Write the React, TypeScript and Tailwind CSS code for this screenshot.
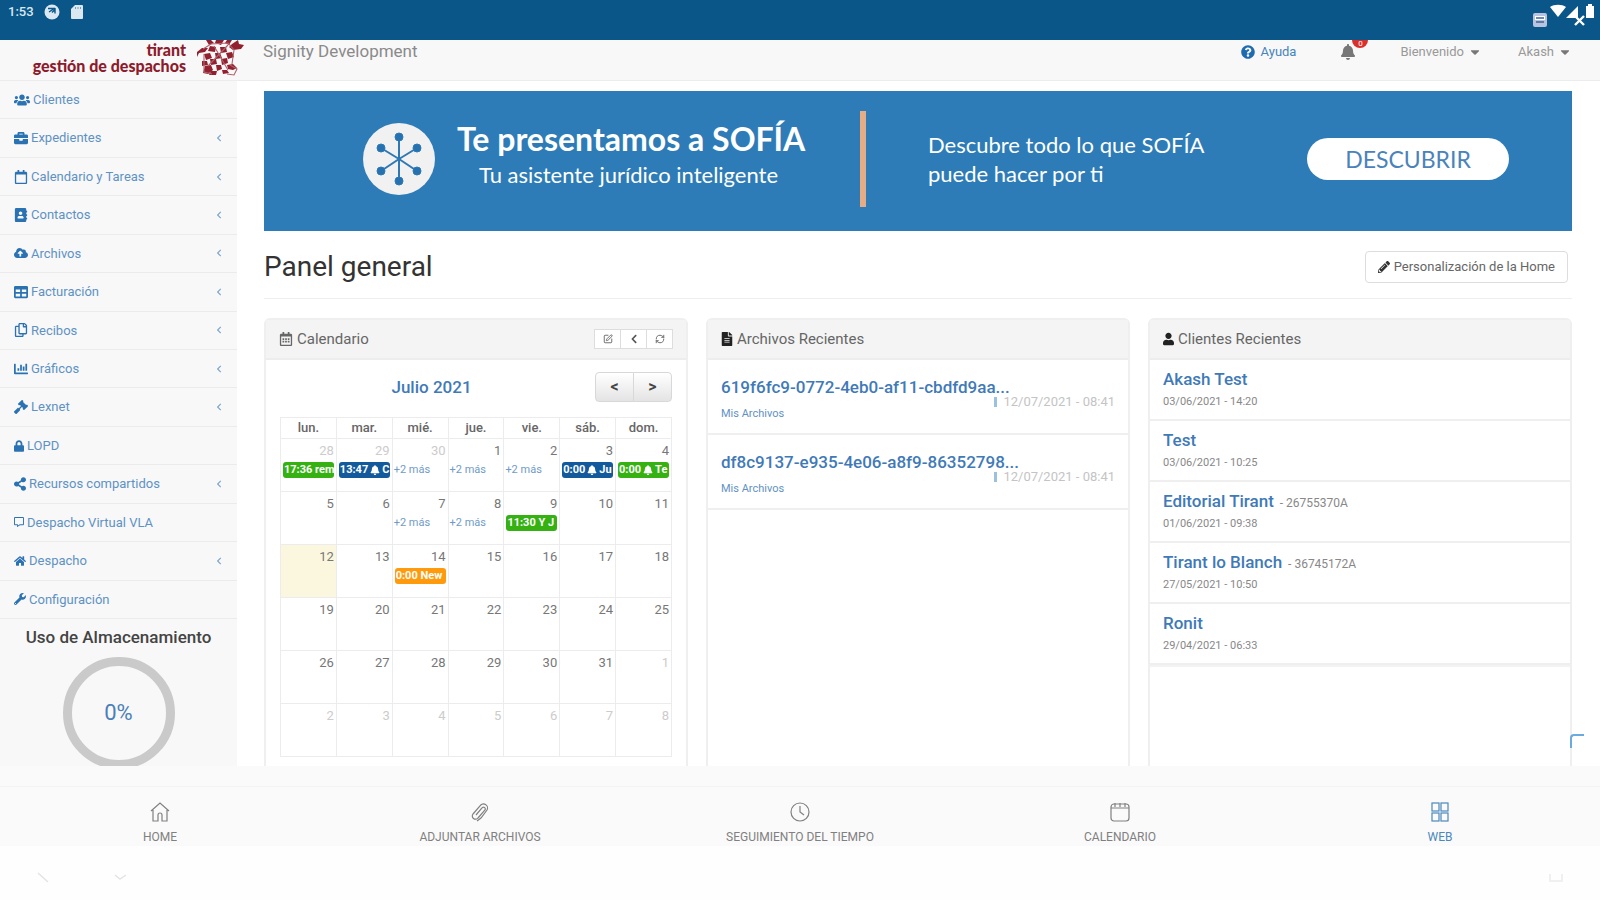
import type { ReactNode } from "react";
import type { IconType } from "react-icons";
import {
  FaAddressBook,
  FaBell,
  FaBriefcase,
  FaCaretDown,
  FaChartBar,
  FaChevronLeft,
  FaCloudUploadAlt,
  FaFileAlt,
  FaGavel,
  FaHome,
  FaLock,
  FaPencilAlt,
  FaQuestionCircle,
  FaRegCalendar,
  FaRegCalendarAlt,
  FaRegCopy,
  FaShareAlt,
  FaTable,
  FaUser,
  FaUsers,
  FaWrench,
} from "react-icons/fa";
import { FaRegMessage } from "react-icons/fa6";
import { LuRefreshCw, LuSquarePen } from "react-icons/lu";

type MenuItem = { label: string; icon: IconType; arrow?: boolean; iconWidth?: string };

const menu: MenuItem[] = [
  { label: "Clientes", icon: FaUsers, iconWidth: "w-4" },
  { label: "Expedientes", icon: FaBriefcase, arrow: true },
  { label: "Calendario y Tareas", icon: FaRegCalendar, arrow: true },
  { label: "Contactos", icon: FaAddressBook, arrow: true },
  { label: "Archivos", icon: FaCloudUploadAlt, arrow: true },
  { label: "Facturación", icon: FaTable, arrow: true },
  { label: "Recibos", icon: FaRegCopy, arrow: true },
  { label: "Gráficos", icon: FaChartBar, arrow: true },
  { label: "Lexnet", icon: FaGavel, arrow: true },
  { label: "LOPD", icon: FaLock, iconWidth: "w-2.5" },
  { label: "Recursos compartidos", icon: FaShareAlt, arrow: true, iconWidth: "w-3" },
  { label: "Despacho Virtual VLA", icon: FaRegMessage, iconWidth: "w-2.5" },
  { label: "Despacho", icon: FaHome, arrow: true, iconWidth: "w-3" },
  { label: "Configuración", icon: FaWrench, iconWidth: "w-3" },
];

type CalEvent = { text: string; color: string; bell?: boolean; after?: string };
type Day = { n: number; out?: boolean; today?: boolean; more?: boolean; event?: CalEvent };

const green = "bg-[#35b112]";
const navy = "bg-[#135a9c]";
const orange = "bg-[#ff9a0c]";

const weekdays = ["lun.", "mar.", "mié.", "jue.", "vie.", "sáb.", "dom."];

const weeks: Day[][] = [
  [
    { n: 28, out: true, event: { text: "17:36 rem", color: green } },
    { n: 29, out: true, event: { text: "13:47", color: navy, bell: true, after: "C" } },
    { n: 30, out: true, more: true },
    { n: 1, more: true },
    { n: 2, more: true },
    { n: 3, event: { text: "0:00", color: navy, bell: true, after: "Ju" } },
    { n: 4, event: { text: "0:00", color: green, bell: true, after: "Te" } },
  ],
  [
    { n: 5 },
    { n: 6 },
    { n: 7, more: true },
    { n: 8, more: true },
    { n: 9, event: { text: "11:30 Y J", color: green } },
    { n: 10 },
    { n: 11 },
  ],
  [
    { n: 12, today: true },
    { n: 13 },
    { n: 14, event: { text: "0:00 New", color: orange } },
    { n: 15 },
    { n: 16 },
    { n: 17 },
    { n: 18 },
  ],
  [19, 20, 21, 22, 23, 24, 25].map((n) => ({ n })),
  [{ n: 26 }, { n: 27 }, { n: 28 }, { n: 29 }, { n: 30 }, { n: 31 }, { n: 1, out: true }],
  [2, 3, 4, 5, 6, 7, 8].map((n) => ({ n, out: true })),
];

const files = [
  { name: "619f6fc9-0772-4eb0-af11-cbdfd9aa...", date: "12/07/2021 - 08:41" },
  { name: "df8c9137-e935-4e06-a8f9-86352798...", date: "12/07/2021 - 08:41" },
];

const clients = [
  { name: "Akash Test", date: "03/06/2021 - 14:20" },
  { name: "Test", date: "03/06/2021 - 10:25" },
  { name: "Editorial Tirant", code: "26755370A", date: "01/06/2021 - 09:38" },
  { name: "Tirant lo Blanch", code: "36745172A", date: "27/05/2021 - 10:50" },
  { name: "Ronit", date: "29/04/2021 - 06:33" },
];

function StatusBar() {
  return (
    <div className="flex h-10 shrink-0 items-start justify-between bg-[#0a5688] px-2 text-white">
      <div className="flex h-6 items-center gap-2.5 text-[#dbe8f2]">
        <span className="text-[13px] font-medium">1:53</span>
        <svg className="size-4" viewBox="0 0 16 16" aria-hidden="true">
          <circle cx="8" cy="8" r="7.5" fill="currentColor" />
          <path d="M4 4.5h6M5 8l6-4M8 8.5l3 -3v4" stroke="#0a5688" strokeWidth="1.4" fill="none" />
        </svg>
        <svg className="h-4 w-3.5" viewBox="0 0 14 16" aria-hidden="true">
          <path d="M5 1h7a1 1 0 0 1 1 1v12a1 1 0 0 1-1 1H2a1 1 0 0 1-1-1V5z" fill="currentColor" />
          <path d="M5.500 3v2M8 3v2M10.500 3v2" stroke="#0a5688" strokeOpacity=".5" />
        </svg>
      </div>
      <svg className="mt-1 -mr-1 h-6 w-16" viewBox="0 0 64 24" aria-hidden="true">
        <rect x="1" y="9" width="14" height="14" rx="2" fill="#b9c3e0" />
        <path d="M3 12h10v4H3z" fill="#fff" />
        <path d="M4 14h8M4 18h8" stroke="#3f6497" strokeWidth="1.400" />
        <path d="M18 3c4-3 12-3 16 0l-8 10z" fill="#fff" />
        <path d="M34 14 46 2v12z" fill="#fff" />
        <path d="m43 12 9 9m0-9-9 9" stroke="#fff" strokeWidth="2.400" />
        <path d="M54 2h2V0h4v2h2v12h-8z" fill="#fff" />
      </svg>
    </div>
  );
}

function DragonLogo() {
  return (
    <svg className="h-9 w-12" viewBox="0 0 48 36" aria-hidden="true">
      <g fill="#93202f">
        <path d="M10 0h5l3 3-5 2zM20 0h8l-3 5-6-2zM31 0h5l-3 5-4-2zM36 4l6-4 1 4 5 1-3 4-8 1-4-3z" />
        <path d="M1 12l5-4 6 0-3 4-6 1-2 4zM14 6l6 1-1 5-7-1zM24 7l6 0 1 5-6 1z" />
        <path d="M8 14l6-1 2 5-6 2zM19 13l5 0 2 5-6 1zM30 13l6-1 2 5-6 2z" />
        <path d="M14 19l6 0 1 5-6 1zM25 19l6-1 1 5-6 2zM6 21l5 0 1 4-6 1z" />
        <path d="M9 26l6-1 2 5-5 4-5-1zM20 25l5 0 1 4-5 2zM31 25l6-1 4 4-4 2-5-1z" />
        <path d="M15 31l6 0-1 4-7 0zM26 30l5 0 2 3-6 1z" />
      </g>
      <g fill="none" stroke="#b0616c" strokeWidth="1.100">
        <path d="M7 9l8-5 17-1 6 7-2 14M8 14v18l8 2M18 6l14 24M32 5 12 26" />
        <path d="M34 25l7 4-3 6-7-1" />
      </g>
    </svg>
  );
}

function TopBar() {
  return (
    <header className="flex h-[41px] shrink-0 items-start justify-between overflow-hidden border-b border-[#ececec] bg-[#f8f8f8]">
      <div className="flex items-start">
        <a href="#" className="flex w-[263px] items-start pl-[29px] text-[#8e1b2c]">
          <span className="flex w-[157px] flex-col pt-0.5 text-right font-[Lato] text-base leading-4 font-black whitespace-nowrap">
            <span>tirant</span>
            <span>gestión de despachos</span>
          </span>
          <span className="ml-2.5">
            <DragonLogo />
          </span>
        </a>
        <span className="text-[17px] leading-[22px] text-[#8a8a8a]">Signity Development</span>
      </div>
      <nav className="flex items-center pr-7 text-[13px] leading-6 text-[#999]">
        <a href="#" className="flex items-center gap-1.5 text-[#4584bd]">
          <FaQuestionCircle className="size-3.5 text-[#1f6bb0]" />
          Ayuda
        </a>
        <button className="relative ml-11" aria-label="Notificaciones">
          <FaBell className="size-4 text-[#777]" />
          <span className="absolute -top-3 left-3 h-4 w-4 rounded-full bg-[#d9302c] text-center text-[8px] leading-6 text-white">
            0
          </span>
        </button>
        <button className="ml-11 flex items-center gap-1">
          Bienvenido <FaCaretDown className="size-3.5 text-[#777]" />
        </button>
        <button className="ml-9 flex items-center gap-1">
          Akash <FaCaretDown className="size-3.5 text-[#777]" />
        </button>
      </nav>
    </header>
  );
}

function Sidebar() {
  return (
    <aside className="w-[237px] shrink-0 overflow-hidden bg-[#f8f8f8]">
      <ul className="grid h-[538px] auto-rows-fr">
        {menu.map(({ label, icon: Icon, arrow, iconWidth = "w-3.5" }) => (
          <li key={label} className="border-b border-[#ebebeb]">
            <a href="#" className="flex h-full items-center gap-[3px] pr-3.5 pl-3.5 text-[13px] text-[#5e92c4]">
              <Icon className={`h-3.5 shrink-0 text-[#2b72b3] ${iconWidth}`} />
              {label}
              {arrow && <FaChevronLeft className="ml-auto size-2 text-[#7fa6cc]" />}
            </a>
          </li>
        ))}
      </ul>
      <div className="flex flex-col items-center pt-1.5">
        <h2 className="text-[17px] font-medium text-[#444]">Uso de Almacenamiento</h2>
        <div className="mt-1.5 flex size-28 items-center justify-center rounded-full border-[9px] border-[#cacaca] text-[22px] text-[#4a80b8]">
          0%
        </div>
      </div>
    </aside>
  );
}

function SofiaIcon() {
  const ends = [
    [36, 14],
    [54, 25],
    [54, 48],
    [36, 58],
    [18, 48],
    [18, 25],
  ];
  return (
    <svg className="size-[72px]" viewBox="0 0 72 72" aria-hidden="true">
      <circle cx="36" cy="36" r="36" fill="#f1f1f1" />
      {ends.map(([x, y]) => (
        <g key={`${x}-${y}`} stroke="#2d78b5" fill="#2671b0">
          <line x1="36" y1="36" x2={x} y2={y} strokeWidth="2" />
          <circle cx={x} cy={y} r="4" />
        </g>
      ))}
    </svg>
  );
}

function Banner() {
  return (
    <section className="flex h-[140px] shrink-0 items-center bg-[#2d7cb7] pr-[63px] pb-1 pl-[99px] font-[Lato] text-white">
      <SofiaIcon />
      <div className="ml-[22px] w-[343px] pb-1 text-center whitespace-nowrap">
        <h2 className="text-[32px] leading-9 font-bold">Te presentamos a SOFÍA</h2>
        <p className="text-[22px] leading-9">Tu asistente jurídico inteligente</p>
      </div>
      <div className="ml-[60px] h-24 w-1.5 bg-[#e5ac85]" />
      <p className="ml-[62px] text-[22px] leading-[29px] whitespace-nowrap">
        Descubre todo lo que SOFÍA
        <br />
        puede hacer por ti
      </p>
      <button className="ml-auto h-[42px] w-[202px] rounded-full bg-white text-[23px] text-[#4a83bb]">
        DESCUBRIR
      </button>
    </section>
  );
}

type PanelProps = { title: string; icon: IconType; iconClass: string; tools?: ReactNode; children: ReactNode };

function Panel({ title, icon: Icon, iconClass, tools, children }: PanelProps) {
  return (
    <section className="rounded-t-md border-2 border-[#efefef] bg-white">
      <div className="flex h-10 items-center gap-1 border-b-2 border-[#ededed] bg-[#f4f4f4] px-[13px]">
        <Icon className={iconClass} />
        <h3 className="text-[15px] text-[#666]">{title}</h3>
        {tools}
      </div>
      {children}
    </section>
  );
}

function CalendarTools() {
  const btn = "flex h-5 w-[27px] items-center justify-center border border-[#ddd] bg-white text-[#555]";
  return (
    <div className="ml-auto flex -space-x-px">
      <button className={btn} aria-label="Editar">
        <LuSquarePen className="size-2.5" />
      </button>
      <button className={btn} aria-label="Anterior">
        <FaChevronLeft className="size-2.5" />
      </button>
      <button className={btn} aria-label="Actualizar">
        <LuRefreshCw className="size-2.5" />
      </button>
    </div>
  );
}

function DayCell({ day }: { day: Day }) {
  return (
    <td className={`h-[53px] border border-[#ececec] p-0 align-top ${day.today ? "bg-[#fbf7de]" : ""}`}>
      <div className={`pr-0.5 text-right text-[13px] leading-[23px] ${day.out ? "text-[#ccc]" : "text-[#777]"}`}>
        {day.n}
      </div>
      {day.more && (
        <a href="#" className="block pl-px text-[11px] leading-4 text-[#6f9bc8]">
          +2 más
        </a>
      )}
      {day.event && (
        <a
          href="#"
          className={`mx-0.5 flex items-center gap-0.5 overflow-hidden rounded-[3px] pl-px text-[11px] leading-4 font-bold whitespace-nowrap text-white ${day.event.color}`}
        >
          {day.event.text}
          {day.event.bell && <FaBell className="size-2.5 shrink-0" />}
          {day.event.after}
        </a>
      )}
    </td>
  );
}

function Calendar() {
  const nav = "h-[30px] w-[39px] border border-[#d8d8d8] bg-linear-to-b from-white to-[#e4e4e4] text-base leading-none font-bold text-[#444]";
  return (
    <Panel title="Calendario" icon={FaRegCalendarAlt} iconClass="size-3.5 text-[#666]" tools={<CalendarTools />}>
      <div className="px-3.5 pt-3 pb-6">
        <div className="flex items-center">
          <h4 className="flex-1 pr-3 text-center text-[17px] leading-6 font-medium text-[#3f7ab8]">Julio 2021</h4>
          <div className="flex -space-x-px">
            <button className={`rounded-l ${nav}`} aria-label="Mes anterior">
              &lt;
            </button>
            <button className={`rounded-r ${nav}`} aria-label="Mes siguiente">
              &gt;
            </button>
          </div>
        </div>
        <table className="mt-[15px] w-full table-fixed border-collapse">
          <thead>
            <tr>
              {weekdays.map((d) => (
                <th key={d} className="h-[21px] border border-[#ececec] p-0 text-[13px] leading-5 font-medium text-[#666]">
                  {d}
                </th>
              ))}
            </tr>
          </thead>
          <tbody>
            {weeks.map((week, i) => (
              <tr key={i}>
                {week.map((day) => (
                  <DayCell key={day.n} day={day} />
                ))}
              </tr>
            ))}
          </tbody>
        </table>
      </div>
    </Panel>
  );
}

function RecentFiles() {
  return (
    <Panel title="Archivos Recientes" icon={FaFileAlt} iconClass="h-3.5 w-3 text-[#222]">
      <ul>
        {files.map((f) => (
          <li key={f.name} className="flex h-[75px] flex-col border-b-2 border-[#efefef] px-[13px] pt-4">
            <a href="#" className="text-[17px] leading-[22px] font-medium text-[#3f7ab8]">
              {f.name}
            </a>
            <div className="flex items-start justify-between">
              <a href="#" className="pt-2 text-[11px] leading-4 text-[#5f92c4]">
                Mis Archivos
              </a>
              <span className="-mt-1 flex items-center gap-1.5 text-[13px] leading-4 text-[#c4c4c4]">
                <span className="h-2.5 w-[3px] bg-[#9cc0e0]" />
                {f.date}
              </span>
            </div>
          </li>
        ))}
      </ul>
    </Panel>
  );
}

function RecentClients() {
  return (
    <Panel title="Clientes Recientes" icon={FaUser} iconClass="h-3.5 w-[11px] text-[#222]">
      <ul className="border-b-2 border-[#f3f3f3]">
        {clients.map((c) => (
          <li key={c.name} className="h-[61px] border-b-2 border-[#efefef] px-[13px] pt-2">
            <div className="leading-[22px]">
              <a href="#" className="text-[17px] font-medium text-[#3f7ab8]">
                {c.name}
              </a>
              {c.code && <span className="text-xs text-[#888]"> &nbsp;- {c.code}</span>}
            </div>
            <p className="text-[11px] leading-[22px] text-[#888]">{c.date}</p>
          </li>
        ))}
      </ul>
    </Panel>
  );
}

const tabs = [
  {
    label: "HOME",
    icon: <path d="M2 10 11 2l9 8M4 9v11h5v-6a2 2 0 0 1 4 0v6h5V9" />,
  },
  {
    label: "ADJUNTAR ARCHIVOS",
    icon: <path d="m7 14 6-7a1.500 1.500 0 0 1 3 2l-7 8a3 3 0 0 1-5-4l7-8a4 4 0 0 1 7 4l-6 8-4 3" />,
  },
  {
    label: "SEGUIMIENTO DEL TIEMPO",
    icon: (
      <>
        <circle cx="11" cy="11" r="9" />
        <path d="M11 5v6l4 3" />
      </>
    ),
  },
  {
    label: "CALENDARIO",
    icon: (
      <>
        <rect x="2" y="3" width="18" height="17" rx="3" />
        <path d="M2 7h18M6 2v4M11 2v4M16 2v4" />
      </>
    ),
  },
  {
    label: "WEB",
    active: true,
    icon: (
      <>
        <rect x="3" y="2" width="7" height="8" />
        <rect x="12" y="2" width="7" height="8" />
        <rect x="3" y="12" width="7" height="8" />
        <rect x="12" y="12" width="7" height="8" />
      </>
    ),
  },
];

function BottomNav() {
  return (
    <nav className="shrink-0 bg-[#fafafa] pt-5">
      <div className="grid h-[60px] grid-cols-5 border-t border-[#f2f2f2]">
        {tabs.map((t) => (
          <a
            key={t.label}
            href="#"
            className={`flex flex-col items-center pt-3.5 text-xs ${t.active ? "text-[#4a88bd]" : "text-[#808080]"}`}
          >
            <svg className="mb-1.5 size-[22px]" viewBox="0 0 22 22" fill="none" stroke="currentColor" strokeWidth="1.200" aria-hidden="true">
              {t.icon}
            </svg>
            {t.label}
          </a>
        ))}
      </div>
    </nav>
  );
}

function SystemBar() {
  return (
    <div className="flex h-[54px] shrink-0 items-center justify-between bg-[#fefefe] px-9 pt-2.5">
      <svg className="h-4 w-24" viewBox="0 0 96 16" fill="none" stroke="#e4e4e4" strokeWidth="1.500" aria-hidden="true">
        <path d="m2 3 10 9M79 5l5 4 6-4" />
      </svg>
      <svg className="size-4" viewBox="0 0 16 16" fill="none" stroke="#ececec" strokeWidth="1.500" aria-hidden="true">
        <path d="M2 4v7h12V4" />
      </svg>
    </div>
  );
}

export default function App() {
  return (
    <div className="flex h-screen flex-col overflow-hidden bg-white font-[Roboto,sans-serif]">
      <StatusBar />
      <TopBar />
      <div className="relative flex min-h-0 flex-1 overflow-hidden">
        <Sidebar />
        <main className="flex min-w-0 flex-1 flex-col pt-2.5 pr-7 pl-[27px]">
          <Banner />
          <div className="mb-[19px] flex h-[68px] shrink-0 items-center justify-between border-b border-[#eee] pt-1">
            <h1 className="text-[28px] text-[#333]">Panel general</h1>
            <button className="mr-1 flex h-8 items-center gap-1 rounded border border-[#ddd] px-3 text-[13px] text-[#666]">
              <FaPencilAlt className="size-3 text-[#333]" />
              Personalización de la Home
            </button>
          </div>
          <div className="grid shrink-0 grid-cols-3 gap-[18px]">
            <Calendar />
            <RecentFiles />
            <RecentClients />
          </div>
        </main>
        <div className="absolute right-4 bottom-[18px] size-3.5 rounded-tl-sm border-t-2 border-l-2 border-[#6aaade]" />
      </div>
      <BottomNav />
      <SystemBar />
    </div>
  );
}
